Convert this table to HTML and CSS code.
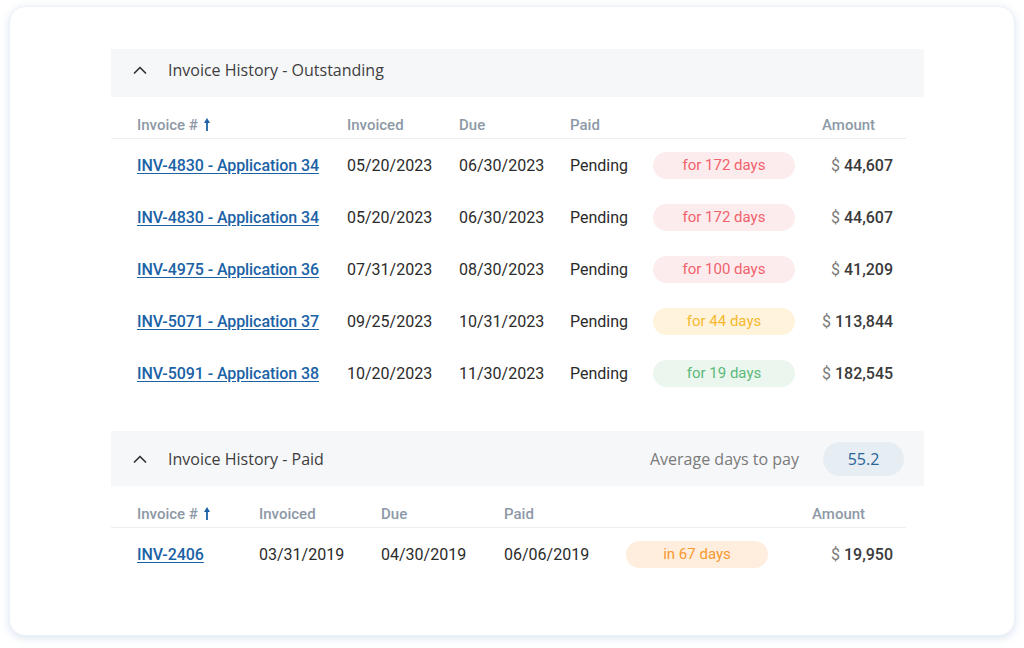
FILE: index.html
```html
<!DOCTYPE html>
<html>
<head>
<meta charset="utf-8">
<link rel="stylesheet" href="styles.css">
</head>
<body>
<div class="card">
  <section class="section">
    <div class="bar">
      <svg class="chev" width="16" height="10" viewBox="0 0 16 10"><path d="M2.5 8 L8 2.5 L13.5 8" fill="none" stroke="#333" stroke-width="1.7" stroke-linecap="round" stroke-linejoin="round"/></svg>
      <span class="title">Invoice History - Outstanding</span>
    </div>
    <div class="table out">
      <div class="row head">
        <span>Invoice # <svg class="sort" width="8" height="15" viewBox="0 0 8 15"><path d="M4 14 V3" stroke="#1b62a6" stroke-width="1.8"/><path d="M1 6 L4 1 L7 6 Z" fill="#1b62a6"/></svg></span>
        <span>Invoiced</span><span>Due</span><span>Paid</span><span></span><span></span><span>Amount</span>
      </div>
      <div class="row">
        <a class="link" href="#">INV-4830 - Application 34</a><span>05/20/2023</span><span>06/30/2023</span><span>Pending</span><span class="badge red">for 172 days</span><span></span><span class="amt"><span class="cur">$</span> 44,607</span>
      </div>
      <div class="row">
        <a class="link" href="#">INV-4830 - Application 34</a><span>05/20/2023</span><span>06/30/2023</span><span>Pending</span><span class="badge red">for 172 days</span><span></span><span class="amt"><span class="cur">$</span> 44,607</span>
      </div>
      <div class="row">
        <a class="link" href="#">INV-4975 - Application 36</a><span>07/31/2023</span><span>08/30/2023</span><span>Pending</span><span class="badge red">for 100 days</span><span></span><span class="amt"><span class="cur">$</span> 41,209</span>
      </div>
      <div class="row">
        <a class="link" href="#">INV-5071 - Application 37</a><span>09/25/2023</span><span>10/31/2023</span><span>Pending</span><span class="badge yellow">for 44 days</span><span></span><span class="amt"><span class="cur">$</span> 113,844</span>
      </div>
      <div class="row">
        <a class="link" href="#">INV-5091 - Application 38</a><span>10/20/2023</span><span>11/30/2023</span><span>Pending</span><span class="badge green">for 19 days</span><span></span><span class="amt"><span class="cur">$</span> 182,545</span>
      </div>
    </div>
  </section>

  <section class="section paid-section">
    <div class="bar tall">
      <svg class="chev" width="16" height="10" viewBox="0 0 16 10"><path d="M2.5 8 L8 2.5 L13.5 8" fill="none" stroke="#333" stroke-width="1.7" stroke-linecap="round" stroke-linejoin="round"/></svg>
      <span class="title">Invoice History - Paid</span>
      <span class="avg-label">Average days to pay</span>
      <span class="avg-pill">55.2</span>
    </div>
    <div class="table paid">
      <div class="row head">
        <span>Invoice # <svg class="sort" width="8" height="15" viewBox="0 0 8 15"><path d="M4 14 V3" stroke="#1b62a6" stroke-width="1.8"/><path d="M1 6 L4 1 L7 6 Z" fill="#1b62a6"/></svg></span>
        <span>Invoiced</span><span>Due</span><span>Paid</span><span></span><span></span><span>Amount</span>
      </div>
      <div class="row">
        <a class="link" href="#">INV-2406</a><span>03/31/2019</span><span>04/30/2019</span><span>06/06/2019</span><span class="badge orange">in 67 days</span><span></span><span class="amt"><span class="cur">$</span> 19,950</span>
      </div>
    </div>
  </section>
</div>
</body>
</html>
```

FILE: styles.css
```css
* { box-sizing: border-box; }
html, body { margin: 0; padding: 0; background: #ffffff; }
body {
  padding: 6px 9px 12px 9px;
  font-family: Roboto, "Liberation Sans", sans-serif;
}
.card {
  width: 1006px;
  height: 630px;
  background: #fff;
  border-radius: 16px;
  border: 1px solid #edf2f8;
  box-shadow: 0 2px 8px rgba(170, 195, 225, 0.45);
  padding: 42px 90px 0 101px;
}
.section { display: flex; flex-direction: column; }
.paid-section { margin-top: 32px; }
.bar {
  height: 48px;
  background: #f6f7f9;
  display: flex;
  align-items: center;
  padding-left: 21px;
  padding-bottom: 6px;
}
.bar.tall { height: 55px; padding-right: 20px; padding-bottom: 0; }
.chev { flex: none; margin-right: 20px; margin-top: 0; }
.title {
  font-family: "Open Sans", sans-serif;
  font-size: 16px;
  color: #3e3e3e;
  flex: 1;
}
.avg-label {
  font-family: "Open Sans", sans-serif;
  font-size: 16px;
  color: #7a7a7a;
  margin-right: 24px;
}
.avg-pill {
  width: 81px;
  height: 34px;
  border-radius: 17px;
  background: #e6edf3;
  color: #2a6598;
  font-family: "Open Sans", sans-serif;
  font-size: 16px;
  display: flex;
  align-items: center;
  justify-content: center;
}
.table {
  width: 795px;
  margin-top: 14px;
}
.row {
  display: grid;
  align-items: center;
  height: 52px;
  padding-left: 26px;
  font-size: 16px;
  color: #2b2b2b;
}
.out .row { grid-template-columns: 210px 112px 111px 83px 142px 27px 71px; }
.paid .row { grid-template-columns: 122px 122px 123px 122px 142px 44px 81px; }
.row.head {
  height: 28px;
  border-bottom: 1px solid #eceef1;
  font-size: 15px;
  font-weight: 500;
  color: #8d99a6;
}
.sort { vertical-align: -2px; margin-left: 1px; }
.link {
  color: #1b62a6;
  font-weight: 500;
  letter-spacing: -0.08px;
  text-decoration: underline;
  text-underline-offset: 2px;
}
.badge {
  height: 27px;
  border-radius: 14px;
  display: flex;
  align-items: center;
  justify-content: center;
  font-size: 15px;
}
.badge.red { background: #fdeced; color: #f1616b; }
.badge.yellow { background: #fff3dc; color: #f6b92f; }
.badge.green { background: #ebf6ee; color: #5cb97a; }
.badge.orange { background: #ffeedd; color: #f7982f; }
.amt { text-align: right; font-weight: 500; color: #3a3a3a; white-space: nowrap; }
.cur { font-weight: 400; color: #7a7a7a; }
```
